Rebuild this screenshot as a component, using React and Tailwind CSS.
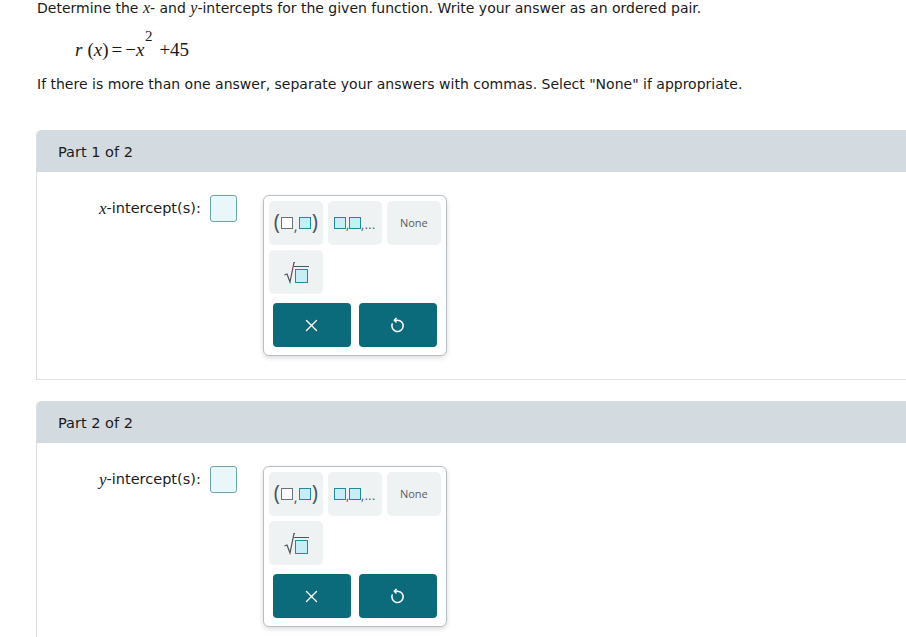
import React from "react";

const verdana = { fontFamily: "Verdana, 'DejaVu Sans', sans-serif" };
const serif = { fontFamily: "'Liberation Serif', 'Times New Roman', serif" };
const ui = { fontFamily: "'Open Sans', 'Noto Sans', sans-serif" };

function Sq({ filled }) {
  return (
    <span
      className={
        "inline-block w-[12px] h-[12px] border-[1.5px] " +
        (filled ? "bg-[#c8eef5] border-[#1f8aa0]" : "bg-white border-[#6b7378]")
      }
    />
  );
}

function PadBtn({ children }) {
  return (
    <div className="w-[54px] h-[44px] rounded-[5px] bg-[#eff2f3] flex items-center justify-center">
      {children}
    </div>
  );
}

function UndoIcon() {
  return (
    <svg width="17" height="17" viewBox="0 0 24 24" fill="none" stroke="white" strokeWidth="2.2" strokeLinecap="round" strokeLinejoin="round">
      <path d="M8 4.5 H12 a8 8 0 1 1 -7.6 5.5" />
      <path d="M10 2 L7.5 4.5 L10 7" />
    </svg>
  );
}

function XIcon() {
  return (
    <svg width="15" height="15" viewBox="0 0 24 24" fill="none" stroke="white" strokeWidth="2.2" strokeLinecap="round">
      <path d="M4 4 L20 20 M20 4 L4 20" />
    </svg>
  );
}

function Palette() {
  return (
    <div className="w-[184px] rounded-[6px] border border-[#b7bfc4] bg-white shadow-[0_2px_5px_rgba(0,0,0,0.15)] p-[5px] pb-[8px]" style={ui}>
      <div className="flex gap-[5px]">
        <PadBtn>
          <span className="flex items-center text-[21px] text-[#4a5358] leading-none">
            <span className="mr-[1px] -mt-[2px]">(</span>
            <Sq />
            <span className="mx-[1px] mt-[4px] text-[15px]">,</span>
            <Sq filled />
            <span className="ml-[1px] -mt-[2px]">)</span>
          </span>
        </PadBtn>
        <PadBtn>
          <span className="flex items-center text-[#4a5358] leading-none">
            <Sq filled />
            <span className="text-[12px] mt-[3px]">,</span>
            <Sq filled />
            <span className="text-[12px] mt-[3px] tracking-[0.5px]">,...</span>
          </span>
        </PadBtn>
        <PadBtn>
          <span className="text-[11px] text-[#555d62]">None</span>
        </PadBtn>
      </div>
      <div className="flex mt-[5px]">
        <PadBtn>
          <span className="flex items-end text-[#4a5358] leading-none">
            <svg width="11" height="23" viewBox="0 0 11 23" fill="none" stroke="#4a5358" strokeWidth="1.2">
              <path d="M0.5 14 L3 13 L6 21 L10 1.5 L11 1.5" />
            </svg>
            <span className="inline-block w-[13px] h-[14px] bg-[#c8eef5] border-[1.5px] border-[#1f8aa0] mb-[1px] relative">
              <span className="absolute -top-[4px] -left-[2px] right-[-2px] h-[1px] bg-[#4a5358]" />
            </span>
          </span>
        </PadBtn>
      </div>
      <div className="flex gap-[8px] mt-[9px] px-[4px]">
        <div className="w-[78px] h-[44px] rounded-[4px] bg-[#0b6b7b] flex items-center justify-center">
          <XIcon />
        </div>
        <div className="w-[78px] h-[44px] rounded-[4px] bg-[#0b6b7b] flex items-center justify-center">
          <UndoIcon />
        </div>
      </div>
    </div>
  );
}

function Part({ title, v }) {
  return (
    <div className="ml-[36px] w-[900px] rounded-tl-[5px] border-l border-b border-[#d9dee1]">
      <div className="h-[42px] bg-[#d4dbe0] rounded-tl-[5px] flex items-center pl-[21px] pt-[3px] text-[14.5px] text-[#1a1a1a]" style={verdana}>
        {title}
      </div>
      <div className="flex items-start pt-[23px] pb-[23px] pl-[62px]">
        <div className="h-[28px] flex items-center text-[14.5px] text-[#1a1a1a] mr-[9px]" style={verdana}>
          <span className="italic text-[17px]" style={serif}>{v}</span>
          <span>-intercept(s):</span>
        </div>
        <div className="w-[27px] h-[27px] rounded-[3px] border-[1.5px] border-[#6fa3ae] bg-[#e9f7fa] mr-[26px]" />
        <Palette />
      </div>
    </div>
  );
}

export default function App() {
  return (
    <div className="w-[906px] h-[637px] overflow-hidden bg-white text-[#1a1a1a]">
      <div className="pl-[37px] text-[14px] leading-[15px]" style={verdana}>
        Determine the <span className="italic text-[16px] leading-none" style={serif}>x</span>- and{" "}
        <span className="italic text-[16px] leading-none" style={serif}>y</span>-intercepts for the given function. Write your answer as an ordered pair.
      </div>
      <div className="pl-[75px] mt-[15px] h-[28px] flex items-end text-[19px] leading-none" style={serif}>
        <span className="italic">r</span>
        <span className="ml-[5px]">(</span>
        <span className="italic">x</span>
        <span>)</span>
        <span className="mx-[3px]">=</span>
        <span>−</span>
        <span className="italic relative">
          x<span className="absolute not-italic text-[15px] -top-[11px] left-[9px]">2</span>
        </span>
        <span className="ml-[15px]">+45</span>
      </div>
      <div className="pl-[37px] mt-[16px] text-[14px] leading-[18px]" style={verdana}>
        If there is more than one answer, separate your answers with commas. Select "None" if appropriate.
      </div>
      <div className="mt-[37px]">
        <Part title="Part 1 of 2" v="x" />
      </div>
      <div className="mt-[21px]">
        <Part title="Part 2 of 2" v="y" />
      </div>
    </div>
  );
}
